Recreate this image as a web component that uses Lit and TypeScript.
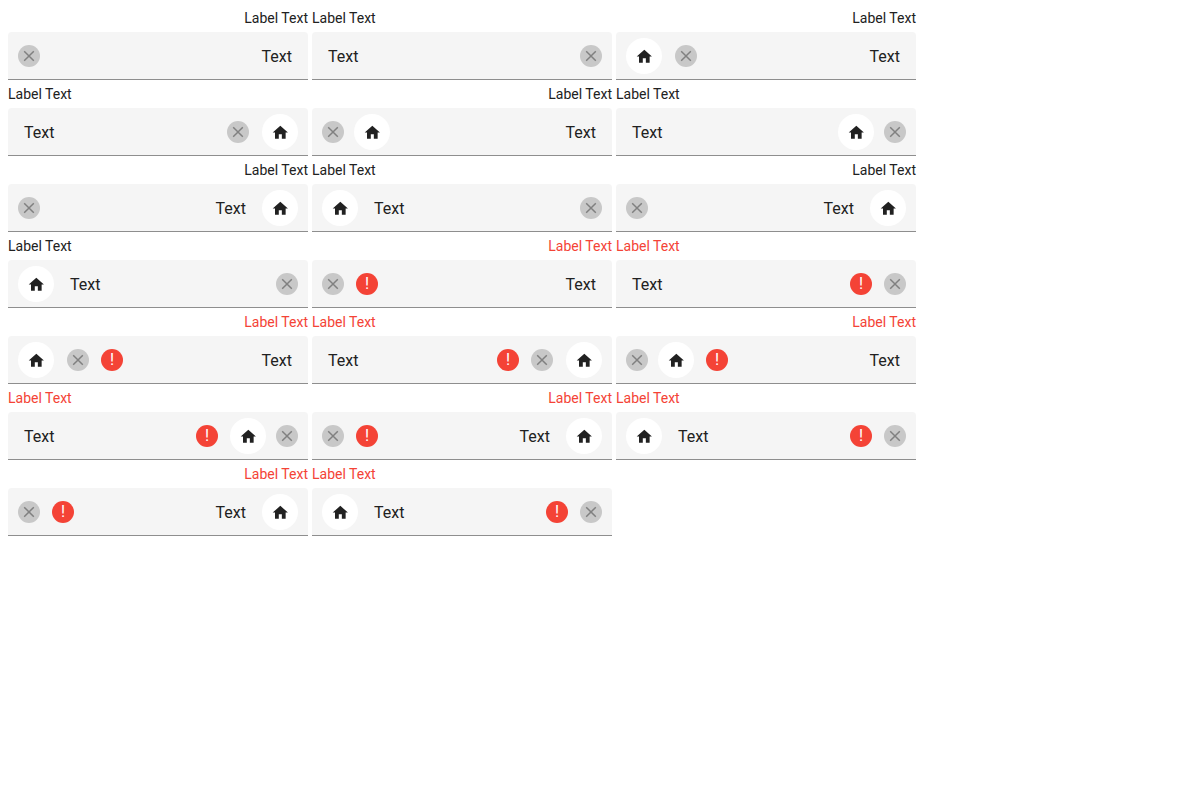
import { LitElement, html, css, svg } from "lit";
import { customElement, property } from "lit/decorators.js";
import { classMap } from "lit/directives/class-map.js";

type Part = "text" | "clear" | "home" | "error";

// Parts in inline order; each layout is drawn right-to-left, then left-to-right.
const layouts: Part[][] = [
  ["text", "clear"],
  ["text", "clear", "home"],
  ["text", "home", "clear"],
  ["home", "text", "clear"],
  ["home", "text", "clear"],
  ["text", "error", "clear"],
  ["text", "error", "clear", "home"],
  ["text", "error", "home", "clear"],
  ["home", "text", "error", "clear"],
  ["home", "text", "error", "clear"],
];

const sequence: { parts: Part[]; rtl: boolean }[] = layouts.flatMap((parts) => [
  { parts, rtl: true },
  { parts, rtl: false },
]);

@customElement("demo-field")
export class DemoField extends LitElement {
  @property({ attribute: false }) parts: Part[] = [];
  @property({ type: Boolean }) rtl = false;

  static styles = css`
    :host {
      display: block;
      width: 300px;
      color: #212121;
    }
    .rtl {
      direction: rtl;
    }
    .label {
      height: 24px;
      font-size: 14px;
      line-height: 20px;
    }
    .invalid .label {
      color: #f44336;
    }
    .box {
      box-sizing: border-box;
      height: 48px;
      padding: 0 10px;
      display: flex;
      align-items: center;
      background: linear-gradient(#8e8e8e, #8e8e8e) bottom / 100% 1px no-repeat #f5f5f5;
      border-radius: 4px 4px 0 0;
    }
    .text {
      flex: 1;
      padding-top: 2px;
      padding-inline-start: 6px;
      font-size: 16px;
      line-height: 24px;
    }
    .home + .text {
      padding-inline-start: 16px;
    }
    .clear,
    .error {
      width: 22px;
      height: 22px;
      flex: none;
      border-radius: 50%;
    }
    .clear {
      background: #c8c8c8;
      color: #808080;
    }
    .error {
      background: #f44336;
      color: #fff;
      font-size: 16px;
      line-height: 22px;
      text-align: center;
      direction: ltr;
    }
    .home {
      width: 36px;
      height: 36px;
      flex: none;
      border-radius: 50%;
      background: #fff;
    }
    .error + .clear,
    .error + .home {
      margin-inline-start: 12px;
    }
    .clear + .home {
      margin-inline-start: 13px;
    }
    .home + .clear {
      margin-inline-start: 10px;
    }
    svg {
      display: block;
      width: 100%;
      height: 100%;
    }
  `;

  private renderPart(part: Part) {
    switch (part) {
      case "text":
        return html`<div class="text">Text</div>`;
      case "clear":
        return html`<div class="clear">
          <svg viewBox="0 0 22 22">
            ${svg`<path d="M6.2 6.2L15.8 15.8M15.8 6.2L6.2 15.8" fill="none" stroke="currentColor" stroke-width="1.5"/>`}
          </svg>
        </div>`;
      case "home":
        return html`<div class="home">
          <svg viewBox="0 0 36 36">
            ${svg`<path transform="translate(9.2 9.5) scale(.76)" d="M10 20v-6h4v6h5v-8h3L12 3 2 12h3v8z" fill="currentColor"/>`}
          </svg>
        </div>`;
      case "error":
        return html`<div class="error">!</div>`;
    }
  }

  render() {
    const classes = { field: true, rtl: this.rtl, invalid: this.parts.includes("error") };
    return html`<div class=${classMap(classes)}>
      <div class="label">Label Text</div>
      <div class="box">${this.parts.map((part) => this.renderPart(part))}</div>
    </div>`;
  }
}

@customElement("app-root")
export class AppRoot extends LitElement {
  static styles = css`
    :host {
      display: block;
      padding: 8px;
      background: #fff;
      font-family: Roboto, sans-serif;
    }
    .grid {
      display: grid;
      grid-template-columns: repeat(3, 300px);
      gap: 4px;
    }
  `;

  // The plain layouts come first, followed by the invalid ones.
  render() {
    return html`<div class="grid">
      ${sequence.map(
        (item) => html`<demo-field .parts=${item.parts} .rtl=${item.rtl}></demo-field>`
      )}
    </div>`;
  }
}
